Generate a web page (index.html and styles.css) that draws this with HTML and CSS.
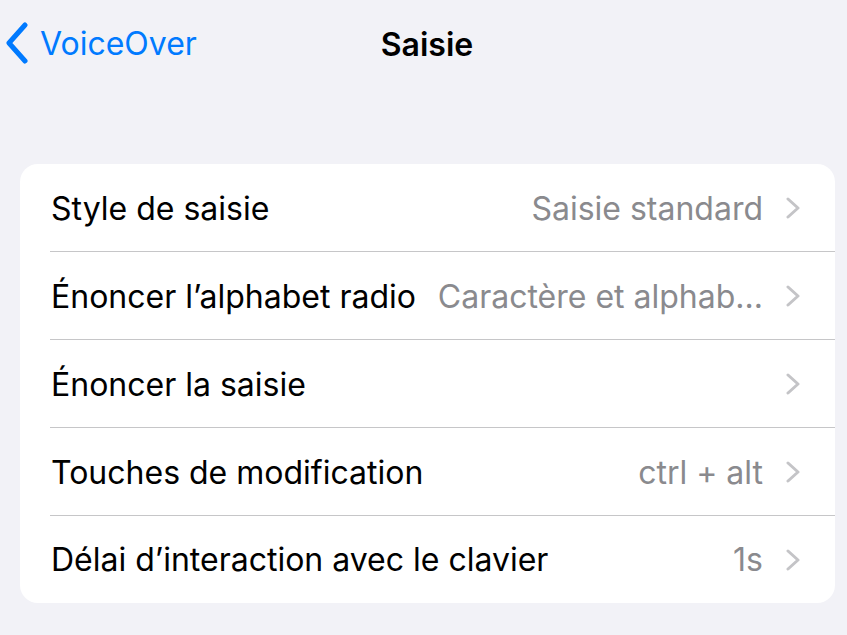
FILE: index.html
```html
<!DOCTYPE html>
<html lang="fr">
<head>
  <meta charset="UTF-8">
  <title>Saisie</title>
  <meta name="viewport" content="width=device-width, initial-scale=1.0">
  <link rel="stylesheet" href="styles.css">
</head>
<body>

  <div class="navbar">
    <a class="back" href="#">
      <svg class="back-icon" width="28" height="42" viewBox="0 0 28 42">
        <path d="M22 3 L6 21 L22 39" fill="none" stroke="#007aff" stroke-width="5" stroke-linecap="round" stroke-linejoin="round"/>
      </svg>
      <span>VoiceOver</span>
    </a>
    <div class="title">Saisie</div>
  </div>

  <div class="group">
    <div class="row">
      <span class="label">Style de saisie</span>
      <span class="value">Saisie standard</span>
      <span class="chevron"><svg width="16" height="22" viewBox="0 0 16 22"><path d="M3 2 L13 11 L3 20" fill="none" stroke="#c4c4c7" stroke-width="3" stroke-linecap="round" stroke-linejoin="round"/></svg></span>
    </div>
    <div class="row">
      <span class="label">Énoncer l’alphabet radio</span>
      <span class="value">Caractère et alphab...</span>
      <span class="chevron"><svg width="16" height="22" viewBox="0 0 16 22"><path d="M3 2 L13 11 L3 20" fill="none" stroke="#c4c4c7" stroke-width="3" stroke-linecap="round" stroke-linejoin="round"/></svg></span>
    </div>
    <div class="row">
      <span class="label">Énoncer la saisie</span>
      <span class="value"></span>
      <span class="chevron"><svg width="16" height="22" viewBox="0 0 16 22"><path d="M3 2 L13 11 L3 20" fill="none" stroke="#c4c4c7" stroke-width="3" stroke-linecap="round" stroke-linejoin="round"/></svg></span>
    </div>
    <div class="row">
      <span class="label">Touches de modification</span>
      <span class="value">ctrl + alt</span>
      <span class="chevron"><svg width="16" height="22" viewBox="0 0 16 22"><path d="M3 2 L13 11 L3 20" fill="none" stroke="#c4c4c7" stroke-width="3" stroke-linecap="round" stroke-linejoin="round"/></svg></span>
    </div>
    <div class="row">
      <span class="label">Délai d’interaction avec le clavier</span>
      <span class="value">1s</span>
      <span class="chevron"><svg width="16" height="22" viewBox="0 0 16 22"><path d="M3 2 L13 11 L3 20" fill="none" stroke="#c4c4c7" stroke-width="3" stroke-linecap="round" stroke-linejoin="round"/></svg></span>
    </div>
  </div>

</body>
</html>
```

FILE: styles.css
```css
* { box-sizing: border-box; }

body, html {
  margin: 0;
  padding: 0;
  background-color: #f2f2f7;
  font-family: 'Inter', 'Roboto', sans-serif;
  color: black;
}

.navbar {
  position: relative;
  height: 88px;
  display: flex;
  align-items: center;
  justify-content: center;
}

.back {
  position: absolute;
  left: 3px;
  top: 22px;
  display: flex;
  align-items: center;
  gap: 9px;
  color: #007aff;
  text-decoration: none;
  font-size: 32px;
}

.title {
  font-size: 32px;
  font-weight: 600;
  margin-left: 7px;
}

.group {
  margin: 76px 12px 0 20px;
  background-color: white;
  border-radius: 18px;
  overflow: hidden;
}

.row {
  position: relative;
  height: 88px;
  display: flex;
  align-items: center;
  padding: 0 34px 0 31px;
  font-size: 32px;
}

.row:last-child {
  height: 87px;
}

.row + .row::before {
  content: '';
  position: absolute;
  top: -1px;
  left: 30px;
  right: 0;
  border-top: 1px solid #c6c6c8;
}

.label {
  white-space: nowrap;
}

.value {
  flex: 1;
  text-align: right;
  color: #8a8a8e;
  white-space: nowrap;
  margin-left: 18px;
  margin-right: 22px;
}

.chevron {
  display: flex;
  align-items: center;
}
```
